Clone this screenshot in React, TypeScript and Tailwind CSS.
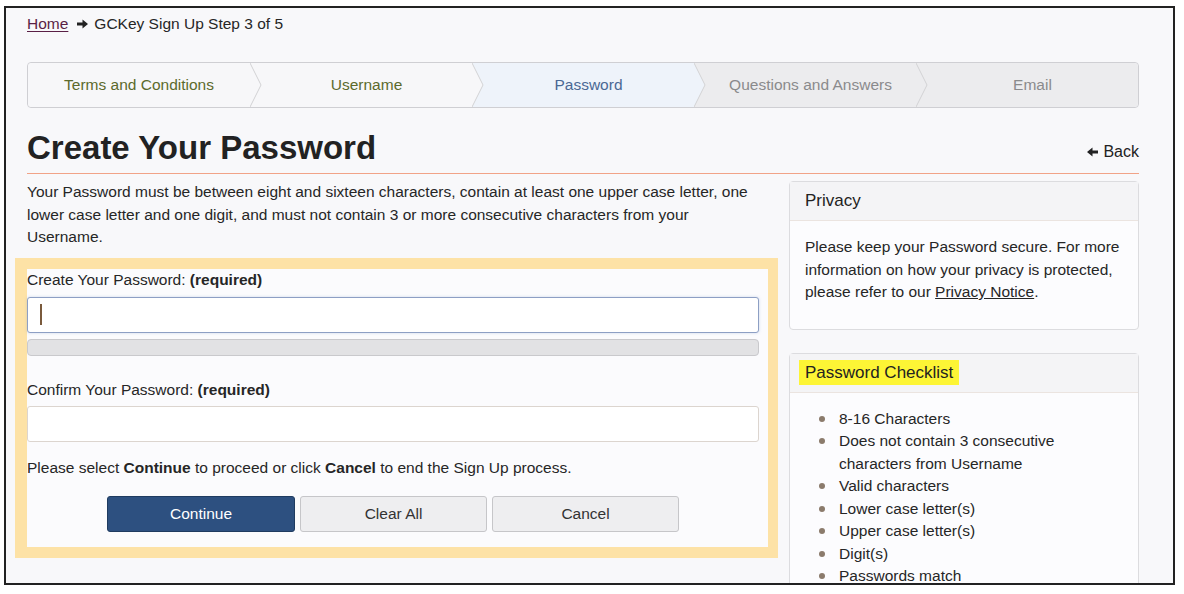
import React from "react";

const steps = [
  { label: "Terms and Conditions", bg: "bg-[#f7f7f9]", fill: "#f7f7f9", text: "text-[#5c6a2c]" },
  { label: "Username", bg: "bg-[#f7f7f9]", fill: "#f7f7f9", text: "text-[#5c6a2c]" },
  { label: "Password", bg: "bg-[#eef3fa]", fill: "#eef3fa", text: "text-[#4a6894]" },
  { label: "Questions and Answers", bg: "bg-[#ececee]", fill: "#ececee", text: "text-[#8a8a8c]" },
  { label: "Email", bg: "bg-[#ececee]", fill: "#ececee", text: "text-[#8a8a8c]" },
];

const checklist = [
  "8-16 Characters",
  "Does not contain 3 consecutive characters from Username",
  "Valid characters",
  "Lower case letter(s)",
  "Upper case letter(s)",
  "Digit(s)",
  "Passwords match",
];

function Arrow({ left = false }: { left?: boolean }) {
  return (
    <svg
      width="11"
      height="10"
      viewBox="0 0 11 10"
      className={left ? "rotate-180" : ""}
    >
      <path d="M0 3.6h5.5V0.5L11 5 5.5 9.5V6.4H0z" fill="#222" />
    </svg>
  );
}

function Stepper() {
  return (
    <div className="mt-[27px] flex h-[46px] rounded-[4px] border border-[#cfcfd3]">
      {steps.map((s, i) => (
        <div
          key={s.label}
          className={`relative flex w-[20%] shrink-0 items-center justify-center ${s.bg} ${
            i === 0 ? "rounded-l-[4px]" : "pl-[11px]"
          } ${i === steps.length - 1 ? "rounded-r-[4px]" : ""}`}
        >
          <span className={`text-[15.5px] ${s.text}`}>{s.label}</span>
          {i < steps.length - 1 && (
            <svg
              width="12"
              height="44"
              viewBox="0 0 12 44"
              className="absolute left-full top-0 z-10"
            >
              <polygon points="0,0 11,22 0,44" fill={s.fill} />
              <polyline
                points="0,0 11,22 0,44"
                fill="none"
                stroke="#d2d2d4"
                strokeWidth="1"
              />
            </svg>
          )}
        </div>
      ))}
    </div>
  );
}

function Panel({
  title,
  children,
  highlight = false,
}: {
  title: string;
  children: React.ReactNode;
  highlight?: boolean;
}) {
  return (
    <div className="rounded-[4px] border border-[#dcdcdf] bg-[#fcfcfe]">
      <div className="flex h-[39px] items-center border-b border-[#ebe4e0] bg-[#f4f4f6] px-[15px]">
        {highlight ? (
          <span className="-ml-[6px] bg-[#fdf535] px-[6px] text-[17px] leading-[25px] text-[#222]">
            {title}
          </span>
        ) : (
          <span className="text-[17px] text-[#222]">{title}</span>
        )}
      </div>
      {children}
    </div>
  );
}

export default function App() {
  return (
    <div className="min-h-[594px] bg-white pl-[4px] pt-[6px] font-['Liberation_Sans',Arial,sans-serif] text-[15.5px] text-[#262626]">
      <div className="h-[579px] w-[1171px] overflow-hidden border-2 border-[#222] bg-[#f8f8fa] pl-[21px] pr-[34px]">
        <div className="flex items-center pt-[5px] leading-[22px]">
          <a className="text-[#5a1f45] underline underline-offset-2">Home</a>
          <span className="ml-[9px] mr-[6px]">
            <Arrow />
          </span>
          <span>GCKey Sign Up Step 3 of 5</span>
        </div>

        <Stepper />

        <div className="mt-[20px] flex items-end justify-between border-b border-[#f1a387] pb-[5px]">
          <h1 className="text-[33px] font-bold leading-[40px] text-[#222]">
            Create Your Password
          </h1>
          <a className="mb-[5px] flex items-center gap-[5px] text-[16px] leading-[22px] text-[#222]">
            <Arrow left />
            Back
          </a>
        </div>

        <div className="flex gap-[31px]">
          <div className="w-[731px] shrink-0">
            <p className="mt-[7px] leading-[22.5px]">
              Your Password must be between eight and sixteen characters,
              contain at least one upper case letter, one lower case letter and
              one digit, and must not contain 3 or more consecutive characters
              from your Username.
            </p>

            <div className="-ml-[12px] mt-[9px] w-[763px] border-[11px] border-l-[12px] border-r-[10px] border-[#fde2a6] bg-[#fbfbfd] pb-[15px] pr-[9px]">
              <label className="block leading-[22px]">
                Create Your Password: <b>(required)</b>
              </label>
              <div className="mt-[6px] flex h-[36px] items-center rounded-[3px] border border-[#8d9fc4] bg-white pl-[12px] shadow-[0_0_3px_rgba(120,150,200,0.35)]">
                <span className="inline-block h-[21px] w-[1.5px] bg-[#7a5a3c]" />
              </div>
              <div className="mt-[6px] h-[17px] rounded-[4px] border border-[#c9c9cc] bg-[#e2e2e4]" />

              <label className="mt-[23px] block leading-[22px]">
                Confirm Your Password: <b>(required)</b>
              </label>
              <div className="mt-[5px] h-[36px] rounded-[3px] border border-[#dcd5cf] bg-white" />

              <p className="mt-[15px] leading-[22px]">
                Please select <b>Continue</b> to proceed or click <b>Cancel</b>{" "}
                to end the Sign Up process.
              </p>

              <div className="mt-[17px] flex justify-center gap-[5px]">
                <button className="h-[36px] w-[188px] rounded-[3px] border border-[#1f3b60] bg-[#2d5080] text-white">
                  Continue
                </button>
                <button className="h-[36px] w-[187px] rounded-[3px] border border-[#c6c6c9] bg-[#eeeef0] text-[#333]">
                  Clear All
                </button>
                <button className="h-[36px] w-[187px] rounded-[3px] border border-[#c6c6c9] bg-[#eeeef0] text-[#333]">
                  Cancel
                </button>
              </div>
            </div>
          </div>

          <div className="mt-[7px] w-[350px] shrink-0">
            <Panel title="Privacy">
              <p className="px-[15px] pb-[25px] pt-[15px] leading-[22.5px]">
                Please keep your Password secure. For more information on how
                your privacy is protected, please refer to our{" "}
                <a className="underline">Privacy Notice</a>.
              </p>
            </Panel>

            <div className="mt-[23px]">
              <Panel title="Password Checklist" highlight>
                <ul className="px-[15px] pb-[15px] pt-[15px] leading-[22.5px]">
                  {checklist.map((item) => (
                    <li key={item} className="relative pl-[34px]">
                      <span className="absolute left-[14px] top-[8px] h-[6px] w-[6px] rounded-full bg-[#8b7b6c]" />
                      {item}
                    </li>
                  ))}
                </ul>
              </Panel>
            </div>
          </div>
        </div>
      </div>
    </div>
  );
}
